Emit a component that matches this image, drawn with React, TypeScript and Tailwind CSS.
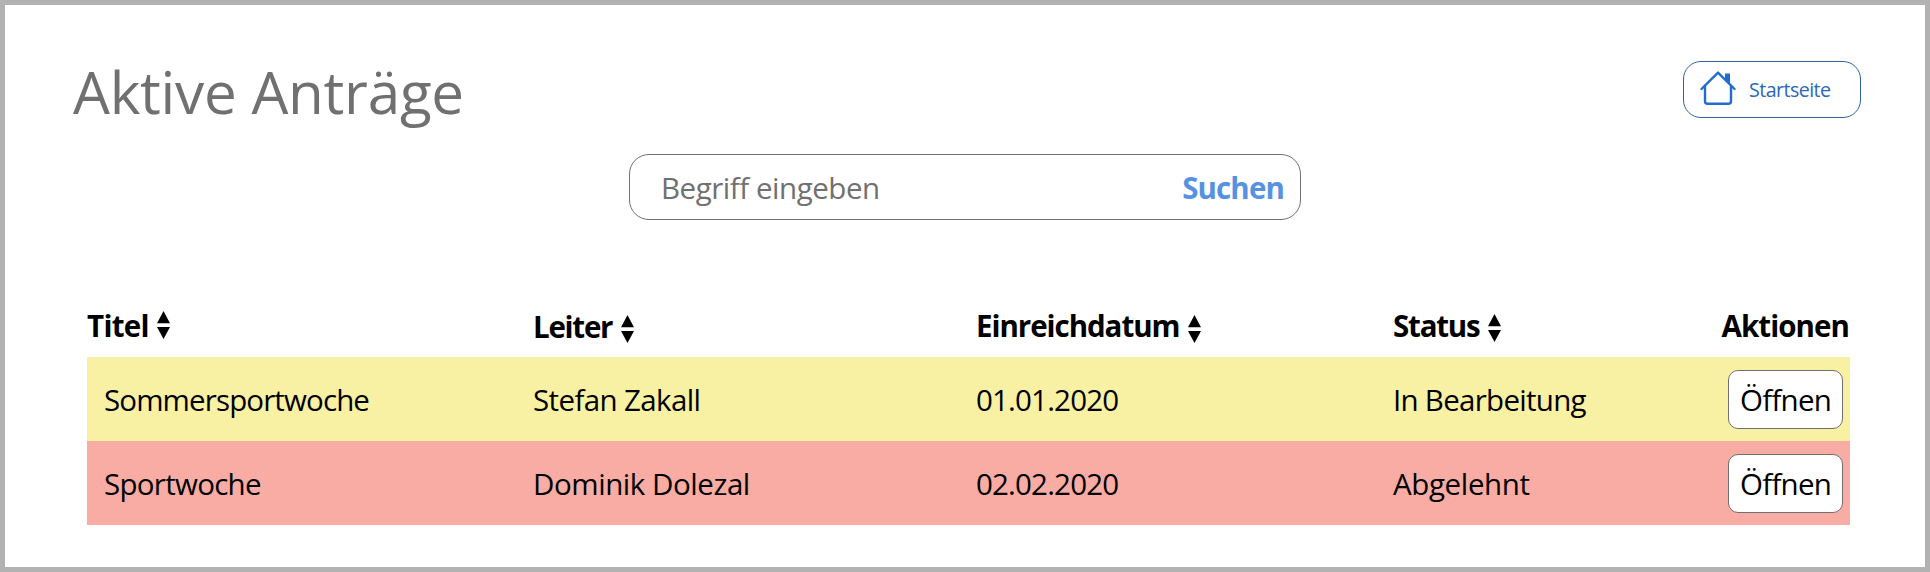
import React from 'react';

function SortIcon({ className }: { className: string }) {
  return (
    <svg className={`h-[28px] w-[13px] shrink-0 ${className}`} viewBox="0 0 13 28" aria-hidden="true">
      <path d="M6.5 0 L13 12.3 H0 Z" fill="#000" />
      <path d="M0 16 H13 L6.5 28 Z" fill="#000" />
    </svg>
  );
}

function HomeIcon() {
  return (
    <svg className="mb-[4px] h-[36px] w-[36px] shrink-0" viewBox="0 0 36 36" fill="none" stroke="#216cd0" strokeLinecap="round" strokeLinejoin="round" aria-hidden="true">
      <path d="M25 3.4 h5 v10.4 l-5 -5 Z" fill="#216cd0" stroke="none" />
      <path d="M1.5 19 L18 2.6 L34.5 19" strokeWidth="2.4" />
      <path d="M5 16 V31.2 Q5 33.8 7.6 33.8 H28.4 Q31 33.8 31 31.2 V16" strokeWidth="2.4" />
    </svg>
  );
}

const rows = [
  {
    color: 'bg-[#f8f0a3]',
    title: 'Sommersportwoche',
    titleClass: 'tracking-[-0.87px]',
    leader: 'Stefan Zakall',
    leaderClass: 'tracking-[-0.62px]',
    date: '01.01.2020',
    status: 'In Bearbeitung',
    statusClass: 'tracking-[-0.71px]',
  },
  {
    color: 'bg-[#f8aca3]',
    title: 'Sportwoche',
    titleClass: 'tracking-[-0.71px]',
    leader: 'Dominik Dolezal',
    leaderClass: 'tracking-[-0.44px]',
    date: '02.02.2020',
    status: 'Abgelehnt',
    statusClass: 'tracking-[-0.37px]',
  },
];

export default function App() {
  return (
    <div className="flex h-[572px] w-[1930px] flex-col overflow-hidden border-[5px] border-[#b2b2b2] bg-white font-['Open_Sans',sans-serif] text-[29.5px] leading-[40px] whitespace-nowrap text-black">
      <header className="flex h-[149px] items-start justify-between pr-[64px] pl-[68px]">
        <h1 className="mt-[47px] text-[58.4px] leading-[80px] tracking-[-0.27px] text-[#707070]">Aktive Anträge</h1>
        <button className="mt-[56px] flex h-[57px] w-[178px] items-center rounded-[18px] border border-[#2f62a3] pl-[16px] text-[19.6px] leading-[27px] tracking-[-0.54px] text-[#2b68b8]">
          <HomeIcon />
          <span className="ml-[13px]">Startseite</span>
        </button>
      </header>

      <form className="ml-[624px] flex h-[66px] w-[672px] shrink-0 items-center justify-between rounded-[20px] border border-[#707070] pt-[2px] pr-[16px] pl-[31px]">
        <span className="tracking-[-0.46px] text-[#707070]">Begriff eingeben</span>
        <button type="button" className="font-bold tracking-[-0.86px] text-[#5792e2]">Suchen</button>
      </form>

      <main className="mt-[79px] ml-[82px] w-[1763px]">
        <div className="grid h-[58px] grid-cols-[446px_443px_417px_1fr] items-start font-bold">
          <div className="flex pt-[7px]">
            <span className="w-[70px] tracking-[-0.7px]">Titel</span>
            <SortIcon className="mt-[5px]" />
          </div>
          <div className="flex pt-[8px]">
            <span className="w-[88px] tracking-[-1.25px]">Leiter</span>
            <SortIcon className="mt-[8px]" />
          </div>
          <div className="flex pt-[7px]">
            <span className="w-[212px] tracking-[-1.04px]">Einreichdatum</span>
            <SortIcon className="mt-[9px]" />
          </div>
          <div className="flex justify-between pt-[7px]">
            <div className="flex">
              <span className="w-[95px] tracking-[-1.21px]">Status</span>
              <SortIcon className="mt-[8px]" />
            </div>
            <span className="pr-px tracking-[-0.93px]">Aktionen</span>
          </div>
        </div>

        {rows.map((row) => (
          <div key={row.title} className={`grid h-[84px] grid-cols-[446px_443px_417px_1fr] items-center ${row.color}`}>
            <span className={`pt-[2px] pl-[17px] ${row.titleClass}`}>{row.title}</span>
            <span className={`pt-[2px] ${row.leaderClass}`}>{row.leader}</span>
            <span className="pt-[2px] tracking-[-0.81px]">{row.date}</span>
            <div className="flex items-center justify-between pr-[7px]">
              <span className={`pt-[2px] ${row.statusClass}`}>{row.status}</span>
              <button className="flex h-[59px] w-[115px] items-center rounded-[10px] border border-[#707070] bg-white pt-[2px] pl-[11px] tracking-[-0.74px]">
                Öffnen
              </button>
            </div>
          </div>
        ))}
      </main>
    </div>
  );
}
